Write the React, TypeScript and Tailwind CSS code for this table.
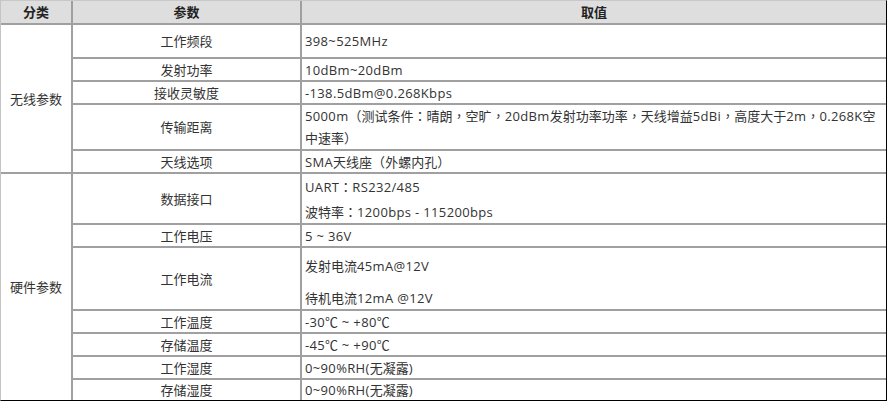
import React from "react";

type Row = {
  name: string;
  value: React.ReactNode;
  h: string;
  top?: boolean;
};

// full-width punctuation sits centred in the reference (TC cut); latin runs are a touch wider
const P = (s: string) =>
  s.split(/([：，（）]|[^\u2100-\u9fff\uff00-\uffef]+)/).map((part, i) => {
    if (!part) return null;
    if (/^[：，（）]$/.test(part))
      return (
        <span key={i} className="font-['Noto_Sans_CJK_TC']">
          {part}
        </span>
      );
    if (/^[^\u2100-\u9fff\uff00-\uffef]+$/.test(part))
      return (
        <span key={i} className="tracking-[0.35px]">
          {part}
        </span>
      );
    return <React.Fragment key={i}>{part}</React.Fragment>;
  });

const wireless: Row[] = [
  { name: "工作频段", value: P("398~525MHz"), h: "h-[34px]" },
  { name: "发射功率", value: P("10dBm~20dBm"), h: "h-[23px]" },
  { name: "接收灵敏度", value: P("-138.5dBm@0.268Kbps"), h: "h-[23px]" },
  {
    name: "传输距离",
    value: (
      <p className="leading-[22px]">
        {P("5000m（测试条件：晴朗，空旷，20dBm发射功率功率，天线增益5dBi，高度大于2m，0.268K空中速率）")}
      </p>
    ),
    h: "h-[45px]",
  },
  { name: "天线选项", value: P("SMA天线座（外螺内孔）"), h: "h-[23px]" },
];

const hardware: Row[] = [
  {
    name: "数据接口",
    value: (
      <div className="flex flex-col gap-[5px] pt-[2px] leading-[20px]">
        <p>{P("UART：RS232/485")}</p>
        <p>{P("波特率：1200bps - 115200bps")}</p>
      </div>
    ),
    h: "h-[51px]",
  },
  { name: "工作电压", value: P("5 ~ 36V"), h: "h-[23px]" },
  {
    name: "工作电流",
    value: (
      <div className="flex flex-col gap-[12px] pt-[8px] leading-[20px]">
        <p>{P("发射电流45mA@12V")}</p>
        <p>{P("待机电流12mA @12V")}</p>
      </div>
    ),
    h: "h-[63px]",
    top: true,
  },
  { name: "工作温度", value: P("-30℃ ~ +80℃"), h: "h-[23px]" },
  { name: "存储温度", value: P("-45℃ ~ +90℃"), h: "h-[23px]" },
  { name: "工作湿度", value: P("0~90%RH(无凝露)"), h: "h-[23px]" },
  { name: "存储湿度", value: P("0~90%RH(无凝露)"), h: "h-[20px]" },
];

function Group({ label, rows, last }: { label: string; rows: Row[]; last?: boolean }) {
  return (
    <>
      {rows.map((r, i) => {
        const lastRow = last && i === rows.length - 1;
        const b = lastRow ? "" : "border-b-2";
        return (
          <tr key={r.name} className={r.h}>
            {i === 0 && (
              <td
                rowSpan={rows.length}
                className={`border-r-2 border-[#a0a0a0] p-0 text-center align-middle ${last ? "" : "border-b-2"}`}
              >
                {label}
              </td>
            )}
            <td className={`border-r-2 ${b} border-[#a0a0a0] p-0 text-center align-middle`}>
              {r.name}
            </td>
            <td
              className={`${b} border-[#a0a0a0] p-0 pl-[3px] pr-[4px] text-left ${r.top ? "align-top" : "align-middle"}`}
            >
              {r.value}
            </td>
          </tr>
        );
      })}
    </>
  );
}

export default function App() {
  return (
    <div className="h-[402px] w-[889px] bg-white">
      <table
        className="w-[887px] table-fixed border-separate border-spacing-0 border-t border-l border-t-[#c8c8c8] border-l-[#c4c4c4] border-r border-b border-r-black border-b-black text-[13px] leading-[18px] text-[#333]"
        style={{ fontFamily: '"Open Sans", "Noto Sans CJK SC", sans-serif' }}
      >
        <colgroup>
          <col className="w-[72px]" />
          <col className="w-[229px]" />
          <col />
        </colgroup>
        <thead>
          <tr className="h-[24px] bg-[#dedede] font-bold text-[#222]">
            <th className="border-r-2 border-b-2 border-[#a0a0a0] p-0 text-center">分类</th>
            <th className="border-r-2 border-b-2 border-[#a0a0a0] p-0 text-center">参数</th>
            <th className="border-b-2 border-[#a0a0a0] p-0 text-center">取值</th>
          </tr>
        </thead>
        <tbody>
          <Group label="无线参数" rows={wireless} />
          <Group label="硬件参数" rows={hardware} last />
        </tbody>
      </table>
    </div>
  );
}
